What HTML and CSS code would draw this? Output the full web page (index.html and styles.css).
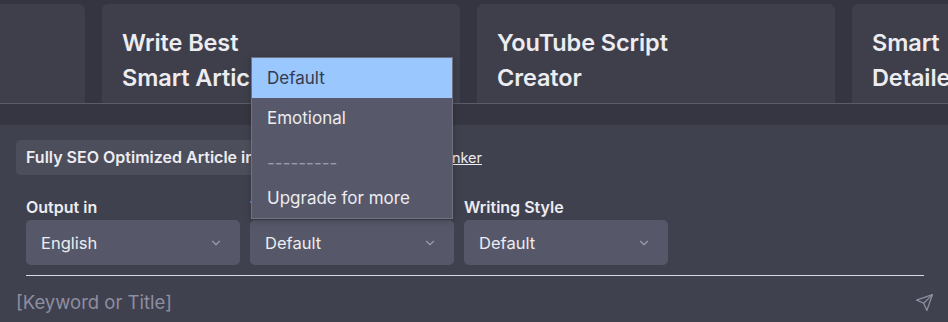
FILE: index.html
```html
<!DOCTYPE html>
<html lang="en">
<head>
    <meta charset="UTF-8">
    <meta name="viewport" content="width=device-width, initial-scale=1.0">
    <title>Prompt templates</title>
    <link rel="stylesheet" href="styles.css">
</head>
<body>
    <!-- prompt cards, scrolled sideways -->
    <section class="cards">
        <div class="card-row">
            <div class="card"><h3>Keyword Strategy</h3></div>
            <div class="card"><h3>Write Best<br>Smart Article</h3></div>
            <div class="card"><h3>YouTube Script<br>Creator</h3></div>
            <div class="card"><h3>Smart<br>Detailed Article</h3></div>
        </div>
    </section>

    <section class="composer">
        <div class="panel">
            <div class="prompt-title">
                <span class="chip">Fully SEO Optimized Article including FAQ's</span>
                <a href="#" class="author">SEO Ranker</a>
            </div>

            <div class="options">
                <div class="field">
                    <label>Output in</label>
                    <div class="select">
                        <span>English</span>
                        <svg class="chevron" viewBox="0 0 24 24"><polyline points="6 9 12 15 18 9"/></svg>
                    </div>
                </div>
                <div class="field">
                    <label>Tone</label>
                    <div class="select">
                        <span>Default</span>
                        <svg class="chevron" viewBox="0 0 24 24"><polyline points="6 9 12 15 18 9"/></svg>
                        <!-- open list -->
                        <ul class="dropdown">
                            <li class="active">Default</li>
                            <li>Emotional</li>
                            <li class="disabled"><span>---------</span></li>
                            <li>Upgrade for more</li>
                        </ul>
                    </div>
                </div>
                <div class="field">
                    <label>Writing Style</label>
                    <div class="select">
                        <span>Default</span>
                        <svg class="chevron" viewBox="0 0 24 24"><polyline points="6 9 12 15 18 9"/></svg>
                    </div>
                </div>
            </div>
            <hr class="divider">

            <div class="input-row">
                <span class="placeholder">[Keyword or Title]</span>
                <svg class="send" viewBox="0 0 24 24"><line x1="22" y1="2" x2="11" y2="13"/><polygon points="22 2 15 22 11 13 2 9 22 2"/></svg>
            </div>
        </div>
    </section>
</body>
</html>
```

FILE: styles.css
```css
* {
    margin: 0;
    padding: 0;
    box-sizing: border-box;
}

body {
    font-family: 'Inter', 'Noto Sans', sans-serif;
    background-color: #343541;
    color: #ececf1;
    height: 322px;
    overflow: hidden;
}

/* 卡片 */
.cards {
    height: 103px;
    overflow: hidden;
    padding-top: 4px;
}

.card-row {
    display: flex;
    gap: 17px;
    margin-left: -273px;
}

.card {
    flex: 0 0 358px;
    height: 140px;
    background-color: #3e3f4b;
    border-radius: 6px;
    padding: 21px 20px;
}

.card h3 {
    font-size: 23.5px;
    font-weight: 600;
    line-height: 35px;
    letter-spacing: -0.1px;
    color: #ececf1;
    white-space: nowrap;
}

/* 底部输入区 */
.composer {
    border-top: 1px solid #5b5c68;
    background-color: #363642;
    padding-top: 21px;
}

.panel {
    background-color: #40414f;
    height: 197px;
    padding: 15px 0 0 0;
}

.prompt-title {
    display: flex;
    align-items: center;
    justify-content: space-between;
    width: 482px;
    padding-left: 16px;
    height: 35px;
}

.chip {
    background-color: #4d4e5c;
    border-radius: 5px;
    height: 35px;
    line-height: 35px;
    padding: 0 10px;
    font-size: 16px;
    font-weight: 600;
    white-space: nowrap;
}

.author {
    font-size: 14.5px;
    color: #ececf1;
    white-space: nowrap;
}

.options {
    display: grid;
    grid-template-columns: 214px 204px 204px;
    gap: 0 10px;
    margin: 22px 0 0 26px;
}

.field label {
    display: block;
    font-size: 16px;
    font-weight: 600;
    line-height: 20px;
    margin-bottom: 3px;
}

.select {
    position: relative;
    display: flex;
    align-items: center;
    justify-content: space-between;
    height: 45px;
    padding: 0 17px 0 15px;
    background-color: #565869;
    border-radius: 5px;
    font-size: 16.5px;
}

.chevron {
    width: 14px;
    height: 14px;
    fill: none;
    stroke: #9a9bab;
    stroke-width: 2;
    stroke-linecap: round;
    stroke-linejoin: round;
}

.dropdown {
    position: absolute;
    left: 1px;
    right: 1px;
    bottom: calc(100% + 1px);
    list-style: none;
    background-color: #575869;
    border: 1px solid #71727f;
    box-shadow: 0 2px 6px rgba(0,0,0,0.25);
}

.dropdown li {
    height: 40px;
    line-height: 40px;
    padding-left: 15px;
    font-size: 17px;
    color: #ececf1;
}

.dropdown li.active {
    background-color: #9ac7fe;
    color: #353a4e;
}

.dropdown li.disabled span {
    color: #9a9bab;
    vertical-align: -5px;
}

.divider {
    border: none;
    border-top: 1px solid #d9d9e3;
    margin: 10px 24px 0 26px;
}

.input-row {
    display: flex;
    align-items: center;
    justify-content: space-between;
    padding: 0 14px 0 16px;
    height: 52px;
}

.placeholder {
    font-size: 18.5px;
    color: #8e8ea0;
}

.send {
    width: 19px;
    height: 19px;
    fill: none;
    stroke: #8e8ea0;
    stroke-width: 1.6;
    stroke-linecap: round;
    stroke-linejoin: round;
}
```
